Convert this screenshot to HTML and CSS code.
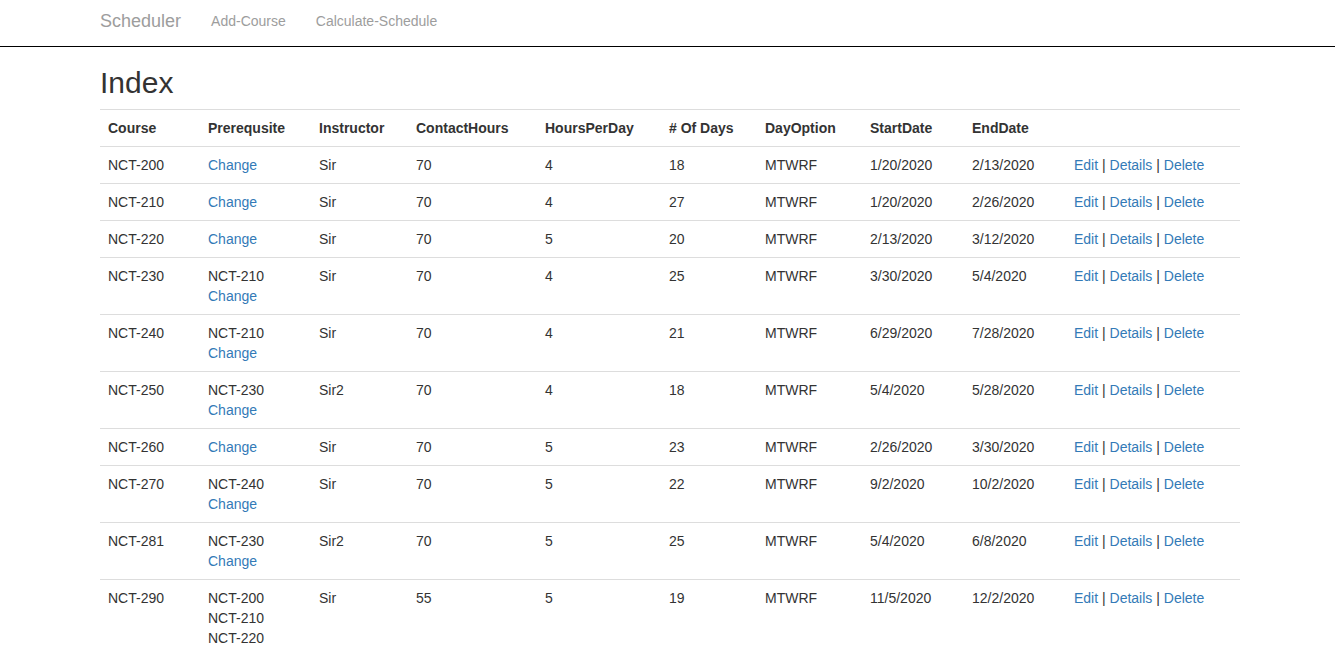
FILE: index.html
```html
<!DOCTYPE html>
<html>
<head>
<meta charset="utf-8">
<title>Index - Scheduler</title>
<link rel="stylesheet" href="styles.css">
</head>
<body>
<nav class="navbar">
  <div class="container nav-inner">
    <a class="brand" href="#">Scheduler</a>
    <a class="nav-link" href="#">Add-Course</a>
    <a class="nav-link" href="#">Calculate-Schedule</a>
  </div>
</nav>
<main class="container">
  <h2 class="title">Index</h2>
  <table class="table">
    <colgroup>
      <col class="c-course"><col class="c-prereq"><col class="c-instr"><col class="c-contact"><col class="c-hours"><col class="c-days"><col class="c-opt"><col class="c-start"><col class="c-end"><col class="c-actions">
    </colgroup>
    <tr>
      <th>Course</th><th>Prerequsite</th><th>Instructor</th><th>ContactHours</th><th>HoursPerDay</th><th># Of Days</th><th>DayOption</th><th>StartDate</th><th>EndDate</th><th></th>
    </tr>
    <tr>
      <td>NCT-200</td><td><a href="#">Change</a></td><td>Sir</td><td>70</td><td>4</td><td>18</td><td>MTWRF</td><td>1/20/2020</td><td>2/13/2020</td>
      <td><a href="#">Edit</a> | <a href="#">Details</a> | <a href="#">Delete</a></td>
    </tr>
    <tr>
      <td>NCT-210</td><td><a href="#">Change</a></td><td>Sir</td><td>70</td><td>4</td><td>27</td><td>MTWRF</td><td>1/20/2020</td><td>2/26/2020</td>
      <td><a href="#">Edit</a> | <a href="#">Details</a> | <a href="#">Delete</a></td>
    </tr>
    <tr>
      <td>NCT-220</td><td><a href="#">Change</a></td><td>Sir</td><td>70</td><td>5</td><td>20</td><td>MTWRF</td><td>2/13/2020</td><td>3/12/2020</td>
      <td><a href="#">Edit</a> | <a href="#">Details</a> | <a href="#">Delete</a></td>
    </tr>
    <tr>
      <td>NCT-230</td><td>NCT-210<br><a href="#">Change</a></td><td>Sir</td><td>70</td><td>4</td><td>25</td><td>MTWRF</td><td>3/30/2020</td><td>5/4/2020</td>
      <td><a href="#">Edit</a> | <a href="#">Details</a> | <a href="#">Delete</a></td>
    </tr>
    <tr>
      <td>NCT-240</td><td>NCT-210<br><a href="#">Change</a></td><td>Sir</td><td>70</td><td>4</td><td>21</td><td>MTWRF</td><td>6/29/2020</td><td>7/28/2020</td>
      <td><a href="#">Edit</a> | <a href="#">Details</a> | <a href="#">Delete</a></td>
    </tr>
    <tr>
      <td>NCT-250</td><td>NCT-230<br><a href="#">Change</a></td><td>Sir2</td><td>70</td><td>4</td><td>18</td><td>MTWRF</td><td>5/4/2020</td><td>5/28/2020</td>
      <td><a href="#">Edit</a> | <a href="#">Details</a> | <a href="#">Delete</a></td>
    </tr>
    <tr>
      <td>NCT-260</td><td><a href="#">Change</a></td><td>Sir</td><td>70</td><td>5</td><td>23</td><td>MTWRF</td><td>2/26/2020</td><td>3/30/2020</td>
      <td><a href="#">Edit</a> | <a href="#">Details</a> | <a href="#">Delete</a></td>
    </tr>
    <tr>
      <td>NCT-270</td><td>NCT-240<br><a href="#">Change</a></td><td>Sir</td><td>70</td><td>5</td><td>22</td><td>MTWRF</td><td>9/2/2020</td><td>10/2/2020</td>
      <td><a href="#">Edit</a> | <a href="#">Details</a> | <a href="#">Delete</a></td>
    </tr>
    <tr>
      <td>NCT-281</td><td>NCT-230<br><a href="#">Change</a></td><td>Sir2</td><td>70</td><td>5</td><td>25</td><td>MTWRF</td><td>5/4/2020</td><td>6/8/2020</td>
      <td><a href="#">Edit</a> | <a href="#">Details</a> | <a href="#">Delete</a></td>
    </tr>
    <tr>
      <td>NCT-290</td><td>NCT-200<br>NCT-210<br>NCT-220<br><a href="#">Change</a></td><td>Sir</td><td>55</td><td>5</td><td>19</td><td>MTWRF</td><td>11/5/2020</td><td>12/2/2020</td>
      <td><a href="#">Edit</a> | <a href="#">Details</a> | <a href="#">Delete</a></td>
    </tr>
  </table>
</main>
</body>
</html>
```
FILE: styles.css
```css
html, body {
  margin: 0;
  padding: 0;
}
body {
  font-family: "Liberation Sans", Arial, Helvetica, sans-serif;
  font-size: 14px;
  line-height: 20px;
  color: #333;
  background: #fff;
}
a {
  color: #337ab7;
  text-decoration: none;
}
.container {
  width: 1140px;
  margin: 0 auto;
  padding-left: 5px;
}
.navbar {
  height: 46px;
  border-bottom: 1px solid #000;
  background: #fff;
}
.nav-inner {
  display: flex;
  align-items: center;
  height: 46px;
}
.brand {
  font-size: 18px;
  line-height: 20px;
  color: #9d9d9d;
  padding: 0 15px 0 0;
  margin-top: -4px;
}
.nav-link {
  font-size: 14px;
  line-height: 20px;
  color: #9d9d9d;
  padding: 0 15px;
  margin-top: -4px;
}
.title {
  font-size: 30px;
  font-weight: 500;
  line-height: 33px;
  margin: 19px 0 10px;
  color: #333;
}
.table {
  width: 100%;
  table-layout: fixed;
  border-collapse: collapse;
  border-spacing: 0;
  margin-bottom: 20px;
}
.c-course { width: 100px; }
.c-prereq { width: 111px; }
.c-instr { width: 97px; }
.c-contact { width: 129px; }
.c-hours { width: 124px; }
.c-days { width: 96px; }
.c-opt { width: 105px; }
.c-start { width: 102px; }
.c-end { width: 102px; }
.c-actions { width: auto; }
.table th,
.table td {
  padding: 8px;
  line-height: 20px;
  vertical-align: top;
  border-top: 1px solid #ddd;
  text-align: left;
}
.table th {
  font-weight: bold;
}
```
